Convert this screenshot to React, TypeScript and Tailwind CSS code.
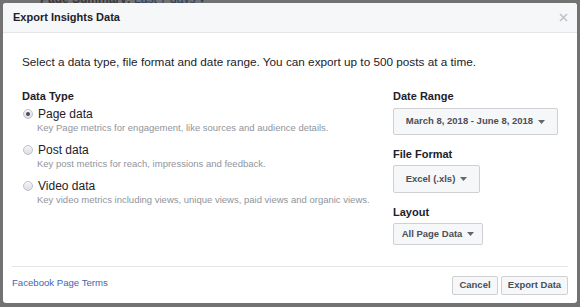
const font = { fontFamily: '"Liberation Sans", Arial, sans-serif' }

function Radio({ checked }: { checked?: boolean }) {
  return (
    <span className="flex h-[10px] w-[10px] shrink-0 items-center justify-center rounded-full border border-[#bec2c9] bg-gradient-to-b from-[#f5f6f7] to-[#dcdee3]">
      {checked && <span className="h-[4px] w-[4px] rounded-full bg-[#4b4f56]" />}
    </span>
  )
}

function Caret() {
  return (
    <svg width="7" height="4" viewBox="0 0 7 4" className="ml-[5px]">
      <path d="M0 0h7L3.5 4z" fill="#606770" />
    </svg>
  )
}

const options = [
  { label: 'Page data', desc: 'Key Page metrics for engagement, like sources and audience details.', checked: true },
  { label: 'Post data', desc: 'Key post metrics for reach, impressions and feedback.' },
  { label: 'Video data', desc: 'Key video metrics including views, unique views, paid views and organic views.' },
]

export default function App() {
  return (
    <div className="flex h-[307px] w-[580px] flex-col overflow-hidden bg-[#727272]" style={font}>
      <div className="h-[3px] overflow-hidden pl-[40px]">
        <div className="-mt-[10px] text-[12px] font-bold text-[#3a3a3a]">
          Page Summary: <span className="font-normal text-[#2c3d63]">Last 7 days ▾</span>
        </div>
      </div>
      <div className="ml-[3px] flex h-[300px] w-[574px] flex-col rounded-[3px] bg-white">
        <div className="flex h-[30px] items-center justify-between rounded-t-[3px] border-b border-[#e5e5e5] bg-[#f6f7f9] pl-[10px] pr-[9px]">
          <span className="text-[11px] font-bold text-[#1d2129]">Export Insights Data</span>
          <svg width="9" height="9" viewBox="0 0 9 9">
            <path d="M1 1l7 7M8 1L1 8" stroke="#bec2c9" strokeWidth="1.6" />
          </svg>
        </div>

        <div className="flex flex-1 flex-col px-[19px] pt-[21px]">
          <p className="text-[11.75px] leading-[16px] text-[#1d2129]">
            Select a data type, file format and date range. You can export up to 500 posts at a time.
          </p>

          <div className="mt-[18px] flex">
            <div className="flex-1">
              <div className="text-[11px] font-bold leading-[16px] text-[#1d2129]">Data Type</div>
              <div className="mt-[2px] flex flex-col gap-[8px]">
                {options.map((o) => (
                  <div key={o.label}>
                    <div className="flex items-center gap-[5px] pl-[1px]">
                      <Radio checked={o.checked} />
                      <span className="text-[12px] leading-[16px] text-[#1d2129]">{o.label}</span>
                    </div>
                    <div className="pl-[15px] text-[9.5px] leading-[12px] text-[#90949c]">{o.desc}</div>
                  </div>
                ))}
              </div>
            </div>

            <div className="flex w-[165px] flex-col items-start">
              <div className="text-[11px] font-bold leading-[16px] text-[#1d2129]">Date Range</div>
              <button className="mt-[4px] flex h-[27px] w-[165px] items-center justify-center rounded-[2px] border border-[#ced0d4] bg-[#f6f7f9] text-[9.5px] font-bold text-[#4b4f56]">
                March 8, 2018 - June 8, 2018
                <Caret />
              </button>
              <div className="mt-[11px] text-[11px] font-bold leading-[16px] text-[#1d2129]">File Format</div>
              <button className="mt-[3px] flex h-[28px] w-[87px] items-center justify-center rounded-[2px] border border-[#ced0d4] bg-[#f6f7f9] text-[9.5px] font-bold text-[#4b4f56]">
                Excel (.xls)
                <Caret />
              </button>
              <div className="mt-[11px] text-[11px] font-bold leading-[16px] text-[#1d2129]">Layout</div>
              <button className="mt-[3px] flex h-[22px] w-[90px] items-center justify-center rounded-[2px] border border-[#ced0d4] bg-[#f6f7f9] text-[9.5px] font-bold text-[#4b4f56]">
                All Page Data
                <Caret />
              </button>
            </div>
          </div>
        </div>

        <div className="mx-[9px] flex h-[37px] items-start justify-between border-t border-[#e5e5e5] pt-[9px]">
          <a className="text-[9.6px] leading-[14px] text-[#4267b2]">Facebook Page Terms</a>
          <div className="flex gap-[3px]">
            <button className="h-[19px] w-[46px] rounded-[2px] border border-[#ced0d4] bg-[#f6f7f9] text-[9.5px] font-bold text-[#4b4f56]">
              Cancel
            </button>
            <button className="h-[19px] w-[67px] rounded-[2px] border border-[#ced0d4] bg-[#f6f7f9] text-[9.5px] font-bold text-[#4b4f56]">
              Export Data
            </button>
          </div>
        </div>
      </div>
    </div>
  )
}
